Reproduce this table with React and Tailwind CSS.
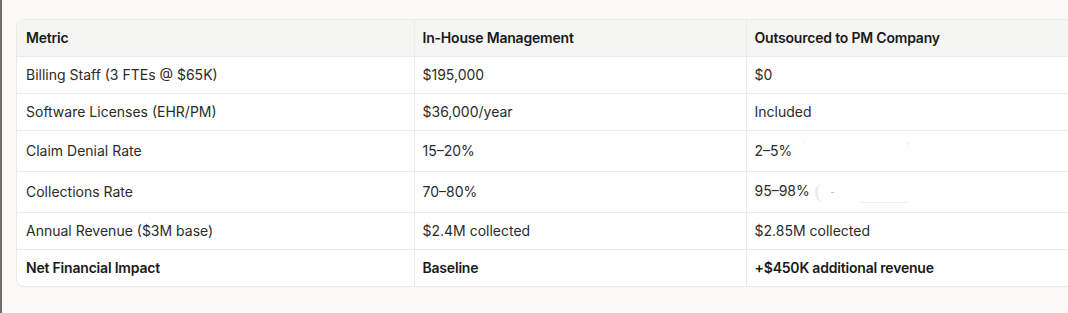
import React from 'react';

const rows = [
  { metric: 'Billing Staff (3 FTEs @ $65K)', inHouse: '$195,000', outsourced: '$0' },
  { metric: 'Software Licenses (EHR/PM)', inHouse: '$36,000/year', outsourced: 'Included' },
  { metric: 'Claim Denial Rate', inHouse: '15–20%', outsourced: '2–5%', tall: true, cite: 'a' },
  { metric: 'Collections Rate', inHouse: '70–80%', outsourced: '95–98%', tall: true, cite: 'b' },
  { metric: 'Annual Revenue ($3M base)', inHouse: '$2.4M collected', outsourced: '$2.85M collected' },
];

const Cell = ({ children, className = '' }) => (
  <td className={`border-b border-l border-[#ebebe9] px-[8px] py-2 align-middle leading-5 first:border-l-0 ${className}`}>
    {children}
  </td>
);

const ComparisonTable = () => {
  return (
    <div className="flex h-[313px] w-[1068px] overflow-hidden bg-[#faf9f7]">
      <div className="w-[2px] shrink-0 bg-[#6e6e6e]" />
      <div className="shrink-0 pl-[14px] pt-[19px]">
        <div className="w-[1080px] overflow-hidden rounded-l-lg border border-[#ebebe9] bg-white">
          <table
            className="w-full border-collapse text-left text-[14px] text-[#2b2b2b]"
            style={{ fontFamily: 'Inter, "Noto Sans", sans-serif' }}
          >
            <colgroup>
              <col className="w-[397px]" />
              <col className="w-[332px]" />
              <col />
            </colgroup>
            <thead>
              <tr className="bg-[#f5f5f4] font-semibold tracking-[-0.2px] text-[#1a1a1a]">
                <Cell className="pl-[9px]">Metric</Cell>
                <Cell>In-House Management</Cell>
                <Cell>Outsourced to PM Company</Cell>
              </tr>
            </thead>
            <tbody>
              {rows.map((r) => (
                <tr key={r.metric} className={r.tall ? 'h-[41px]' : ''}>
                  <Cell className="pl-[9px]">{r.metric}</Cell>
                  <Cell>{r.inHouse}</Cell>
                  <Cell>
                    <span>{r.outsourced}</span>
                    {r.cite === 'a' && (
                      <span className="relative ml-2 inline-block h-4 w-[110px] align-middle">
                        <span className="absolute left-[4px] top-[-4px] h-[3px] w-px bg-[#f0f0ef]" />
                        <span className="absolute right-[2px] top-[-2px] h-[3px] w-px bg-[#e9e9e8]" />
                      </span>
                    )}
                    {r.cite === 'b' && (
                      <span className="relative ml-[5px] inline-block h-[20px] w-[110px] align-middle">
                        <span className="absolute left-0 top-[1px] h-[18px] w-[8px] rounded-l-full border-l-[3px] border-[#ececeb]" />
                        <span className="absolute left-[16px] top-[9px] h-px w-[3px] bg-[#c8c8c8]" />
                        <span className="absolute left-[45px] top-[19px] h-px w-[48px] bg-[#eeeeed]" />
                      </span>
                    )}
                  </Cell>
                </tr>
              ))}
              <tr className="font-semibold tracking-[-0.2px] text-[#1a1a1a]">
                <Cell className="border-b-0 pl-[9px]">Net Financial Impact</Cell>
                <Cell className="border-b-0">Baseline</Cell>
                <Cell className="border-b-0">+$450K additional revenue</Cell>
              </tr>
            </tbody>
          </table>
        </div>
      </div>
    </div>
  );
};

export default function App() {
  return <ComparisonTable />;
}
